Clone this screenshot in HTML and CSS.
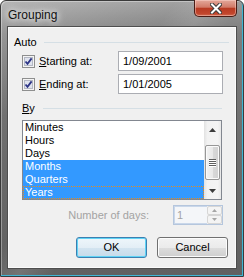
FILE: index.html
```html
<!DOCTYPE html>
<html>

<head>
    <title>Grouping</title>
    <link rel="stylesheet" href="styles.css">
</head>

<body>
    <div class="window">
        <div class="titlebar">
            <span class="title">Grouping</span>
            <div class="close">
                <svg width="12" height="11" viewBox="0 0 12 11">
                    <path d="M2 1.5 L10 9.5 M10 1.5 L2 9.5" stroke="#3a3a3a" stroke-width="4" stroke-linecap="square" fill="none"/>
                    <path d="M2 1.5 L10 9.5 M10 1.5 L2 9.5" stroke="#ffffff" stroke-width="2" stroke-linecap="square" fill="none"/>
                </svg>
            </div>
        </div>

        <div class="client">
            <div class="group-head head-auto"><span>Auto</span></div>

            <div class="row">
                <span class="check">
                    <svg width="13" height="13" viewBox="0 0 13 13">
                        <rect x="0.5" y="0.5" width="12" height="12" fill="#f4f4f4" stroke="#8e8f8f"/>
                        <rect x="2.5" y="2.5" width="8" height="8" fill="#dfe3ee" stroke="#b4b8c4"/>
                        <path d="M3.5 6.5 L5.5 8.8 L9.6 3.4" stroke="#2c3486" stroke-width="1.8" fill="none"/>
                    </svg>
                </span>
                <span class="field-label"><u>S</u>tarting at:</span>
                <div class="edit">1/09/2001</div>
            </div>

            <div class="row">
                <span class="check">
                    <svg width="13" height="13" viewBox="0 0 13 13">
                        <rect x="0.5" y="0.5" width="12" height="12" fill="#f4f4f4" stroke="#8e8f8f"/>
                        <rect x="2.5" y="2.5" width="8" height="8" fill="#dfe3ee" stroke="#b4b8c4"/>
                        <path d="M3.5 6.5 L5.5 8.8 L9.6 3.4" stroke="#2c3486" stroke-width="1.8" fill="none"/>
                    </svg>
                </span>
                <span class="field-label"><u>E</u>nding at:</span>
                <div class="edit">1/01/2005</div>
            </div>

            <div class="group-head head-by"><span><u>B</u>y</span></div>

            <div class="listbox">
                <ul class="items">
                    <li>Minutes</li>
                    <li>Hours</li>
                    <li>Days</li>
                    <li class="selected">Months</li>
                    <li class="selected">Quarters</li>
                    <li class="selected focused">Years</li>
                </ul>
                <div class="scrollbar">
                    <div class="arrow">
                        <svg width="7" height="4" viewBox="0 0 7 4"><path d="M0 4 L3.5 0 L7 4 Z" fill="#3c3c3c"/></svg>
                    </div>
                    <div class="track">
                        <div class="thumb">
                            <span class="grip"></span>
                            <span class="grip"></span>
                            <span class="grip"></span>
                            <span class="grip"></span>
                        </div>
                    </div>
                    <div class="arrow">
                        <svg width="7" height="4" viewBox="0 0 7 4"><path d="M0 0 L7 0 L3.5 4 Z" fill="#3c3c3c"/></svg>
                    </div>
                </div>
            </div>

            <div class="days-row">
                <span class="days-label">Number of days:</span>
                <div class="spinner">
                    <div class="spin-field">1</div>
                    <div class="spin-buttons">
                        <span class="spin-btn">
                            <svg width="5" height="3" viewBox="0 0 5 3"><path d="M0 3 L2.5 0 L5 3 Z" fill="#a6a6a6"/></svg>
                        </span>
                        <span class="spin-btn">
                            <svg width="5" height="3" viewBox="0 0 5 3"><path d="M0 0 L5 0 L2.5 3 Z" fill="#a6a6a6"/></svg>
                        </span>
                    </div>
                </div>
            </div>

            <div class="buttons">
                <div class="btn btn-default">OK</div>
                <div class="btn">Cancel</div>
            </div>
        </div>
    </div>
</body>

</html>
```

FILE: styles.css
```css
body,
html {
    margin: 0;
    padding: 0;
    width: 244px;
    height: 277px;
    overflow: hidden;
}

body {
    font-family: "Liberation Sans", Arial, sans-serif;
    font-size: 11px;
    color: #000;
}

.window {
    box-sizing: border-box;
    width: 244px;
    height: 277px;
    border: 1px solid #3a3a3a;
    border-radius: 6px 6px 0 0;
    padding: 0 6px 7px 6px;
    display: flex;
    flex-direction: column;
    background:
        linear-gradient(155deg, rgba(255, 255, 255, 0.28) 0, rgba(255, 255, 255, 0.1) 18%, transparent 30%),
        linear-gradient(125deg, transparent 40%, rgba(255, 255, 255, 0.12) 48%, transparent 56%),
        linear-gradient(#9a9a9a, #7d7d7d 12%, #6a6a6a 60%, #606060);
    box-shadow: inset -1px -1px 0 #3fb6d4, inset 1px 1px 0 rgba(255, 255, 255, 0.35);
}

/* title bar */
.titlebar {
    height: 25px;
    display: flex;
    justify-content: space-between;
    align-items: flex-start;
    flex-shrink: 0;
}

.title {
    font-size: 12px;
    padding: 7px 0 0 1px;
    color: #111;
    text-shadow: 0 0 6px #fff, 0 0 10px rgba(255, 255, 255, 0.9);
}

.close {
    box-sizing: border-box;
    width: 43px;
    height: 17px;
    margin-top: -1px;
    border: 1px solid #4a1c15;
    border-top: none;
    border-radius: 0 0 5px 5px;
    display: flex;
    align-items: center;
    justify-content: center;
    background: linear-gradient(#e4a89a, #d27a68 45%, #b83a22 52%, #c2462d 85%, #d06a50);
    box-shadow: inset 0 0 0 1px rgba(255, 220, 210, 0.45);
}

/* client area */
.client {
    flex: 1;
    background: #f0f0f0;
    border: 1px solid #4e4e4e;
    box-shadow: inset 0 0 0 1px #fbfbfb;
    padding: 9px 0 0 0;
}

.group-head {
    display: flex;
    align-items: center;
    height: 13px;
    line-height: 13px;
}

.group-head::after {
    content: "";
    flex: 1;
    height: 1px;
    background: #d5dfe5;
}

.head-auto {
    padding: 0 7px 0 6px;
}

.head-auto span {
    margin-right: 7px;
}

.head-by {
    margin-top: 8px;
    padding: 0 14px 0 14px;
}

.head-by span {
    margin-right: 8px;
}

.row {
    display: flex;
    align-items: center;
    height: 20px;
    padding-left: 14px;
    margin-top: 2px;
}

.row + .row {
    margin-top: 3px;
}

.check {
    width: 13px;
    height: 13px;
    margin-right: 4px;
    display: block;
}

.check svg {
    display: block;
}

.field-label {
    width: 79px;
}

.edit {
    box-sizing: border-box;
    width: 105px;
    height: 20px;
    border: 1px solid #abadb3;
    background: #fff;
    padding: 0 0 0 4px;
    line-height: 18px;
}

/* list box */
.listbox {
    box-sizing: border-box;
    margin: 5px 14px 0 14px;
    height: 80px;
    border: 1px solid #828790;
    background: #fff;
    display: flex;
}

.items {
    list-style: none;
    margin: 0;
    padding: 0;
    flex: 1;
}

.items li {
    height: 13px;
    line-height: 13px;
    padding-left: 2px;
}

.items li.selected {
    background: #3399ff;
    color: #fff;
}

.items li.focused {
    outline: 1px dotted #e88a1a;
    outline-offset: -1px;
}

.scrollbar {
    width: 17px;
    display: flex;
    flex-direction: column;
    background: linear-gradient(90deg, #e2e2e2, #f2f2f2 20%, #f4f4f4 80%, #e8e8e8);
}

.arrow {
    height: 17px;
    display: flex;
    align-items: center;
    justify-content: center;
}

.arrow svg {
    display: block;
}

.track {
    flex: 1;
    padding-top: 7px;
}

.thumb {
    box-sizing: border-box;
    height: 35px;
    margin: 0 1px 0 1px;
    border: 1px solid #979797;
    border-radius: 2px;
    background: linear-gradient(90deg, #f3f3f3, #e9e9e9 50%, #d9d9d9 51%, #d2d2d2);
    box-shadow: inset 0 0 0 1px #fbfbfb;
    display: flex;
    flex-direction: column;
    align-items: center;
    justify-content: center;
    gap: 1px;
}

.grip {
    width: 7px;
    height: 1px;
    background: #5f5f5f;
    box-shadow: 0 1px 0 #fff;
}

/* number of days */
.days-row {
    display: flex;
    justify-content: flex-end;
    align-items: center;
    gap: 24px;
    margin-top: 5px;
    padding-right: 13px;
}

.days-label {
    color: #a3a3a3;
}

.spinner {
    box-sizing: border-box;
    width: 50px;
    height: 20px;
    border: 1px solid #b5c6dd;
    background: #f0f0f0;
    display: flex;
}

.spin-field {
    flex: 1;
    border: 1px solid #c9d7ea;
    border-right: none;
    background: #f4f6f9;
    color: #a3a3a3;
    line-height: 16px;
    padding-left: 2px;
}

.spin-buttons {
    width: 15px;
    display: flex;
    flex-direction: column;
}

.spin-btn {
    flex: 1;
    display: flex;
    align-items: center;
    justify-content: center;
    border: 1px solid #d6d6d6;
    border-radius: 2px;
    background: #f4f4f4;
}

.spin-btn svg {
    display: block;
}

/* buttons */
.buttons {
    display: flex;
    justify-content: flex-end;
    gap: 10px;
    margin-top: 12px;
    padding-right: 8px;
}

.btn {
    box-sizing: border-box;
    width: 71px;
    height: 21px;
    line-height: 19px;
    text-align: center;
    border: 1px solid #707070;
    border-radius: 3px;
    background: linear-gradient(#f2f2f2, #ebebeb 50%, #dddddd 51%, #cfcfcf);
    box-shadow: inset 0 0 0 1px #fcfcfc;
}

.btn-default {
    border-color: #3c7fb1;
    background: linear-gradient(#eef6fb, #e3eef6 50%, #d3e4f0 51%, #c6dbea);
    box-shadow: inset 0 0 0 1px #5fd3f5;
}
```
